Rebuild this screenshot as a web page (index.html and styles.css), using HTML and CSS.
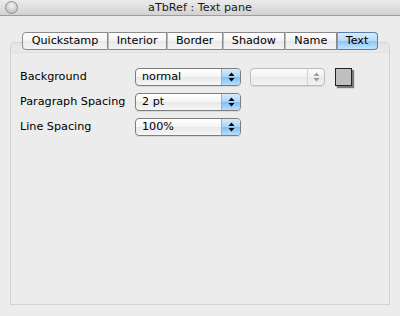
FILE: index.html
```html
<!DOCTYPE html>
<html>
<head>
<meta charset="utf-8">
<link rel="stylesheet" href="styles.css">
</head>
<body>
<div class="window">
  <div class="titlebar">
    <div class="controls"><span class="close"></span></div>
    <div class="title">aTbRef : Text pane</div>
    <div></div>
  </div>
  <div class="body">
    <div class="tabs">
      <span class="tab">Quickstamp</span>
      <span class="tab">Interior</span>
      <span class="tab">Border</span>
      <span class="tab">Shadow</span>
      <span class="tab">Name</span>
      <span class="tab selected">Text</span>
    </div>
    <div class="pane">
      <div class="band"></div>
      <div class="form">
        <div class="label">Background</div>
        <div class="controls-row">
          <div class="popup"><span class="value">normal</span><span class="arrows"><svg width="7" height="10" viewBox="0 0 7 10"><path d="M3.5 0.5 L6.5 4 L0.5 4 Z M0.5 6 L6.5 6 L3.5 9.5 Z" fill="#000"/></svg></span></div>
          <div class="popup disabled"><span class="value"></span><span class="arrows"><svg width="7" height="10" viewBox="0 0 7 10"><path d="M3.5 0.5 L6.5 4 L0.5 4 Z M0.5 6 L6.5 6 L3.5 9.5 Z" fill="#9a9a9a"/></svg></span></div>
          <div class="swatch"></div>
        </div>
        <div class="label">Paragraph Spacing</div>
        <div class="controls-row">
          <div class="popup"><span class="value">2 pt</span><span class="arrows"><svg width="7" height="10" viewBox="0 0 7 10"><path d="M3.5 0.5 L6.5 4 L0.5 4 Z M0.5 6 L6.5 6 L3.5 9.5 Z" fill="#000"/></svg></span></div>
        </div>
        <div class="label">Line Spacing</div>
        <div class="controls-row">
          <div class="popup"><span class="value">100%</span><span class="arrows"><svg width="7" height="10" viewBox="0 0 7 10"><path d="M3.5 0.5 L6.5 4 L0.5 4 Z M0.5 6 L6.5 6 L3.5 9.5 Z" fill="#000"/></svg></span></div>
        </div>
      </div>
    </div>
  </div>
</div>
</body>
</html>
```
FILE: styles.css
```css
html, body {
  margin: 0;
  padding: 0;
}
body {
  width: 400px;
  height: 316px;
  background: #ececec;
  font-family: "DejaVu Sans", "Liberation Sans", sans-serif;
  font-size: 11.2px;
  color: #000;
  overflow: hidden;
}
.window {
  width: 400px;
  height: 316px;
  background: #ececec;
}
.titlebar {
  height: 15px;
  display: grid;
  grid-template-columns: 1fr auto 1fr;
  align-items: center;
  background: linear-gradient(#ebebeb, #d2d2d2);
  border-bottom: 1px solid #9d9d9d;
}
.controls {
  display: flex;
  align-items: center;
  padding-left: 5px;
}
.close {
  display: block;
  width: 11px;
  height: 11px;
  border-radius: 50%;
  border: 1px solid #8f8f8f;
  background: radial-gradient(circle at 50% 35%, #f4f4f4 0%, #cfcfcf 55%, #b0b0b0 100%);
  margin-top: -1px;
}
.title {
  font-size: 11.2px;
  color: #1a1a1a;
  line-height: 15px;
}
.body {
  padding: 16px 10px 0 10px;
}
.tabs {
  display: flex;
  justify-content: center;
  position: relative;
  z-index: 1;
  margin-bottom: -8px;
}
.tab {
  height: 16px;
  line-height: 16px;
  padding: 0 8.2px;
  border: 1px solid #8a8a8a;
  border-left: 1px solid #bcbcbc;
  background: linear-gradient(#ffffff 0%, #f3f3f3 50%, #e8e8e8 51%, #f4f4f4 100%);
}
.tab:first-child {
  border-left: 1px solid #8a8a8a;
  border-radius: 4px 0 0 4px;
}
.tab:last-child {
  border-radius: 0 4px 4px 0;
}
.tab.selected {
  background: linear-gradient(#d8ecfd 0%, #b3d9fb 50%, #8dc5f7 51%, #c3e3fd 100%);
  border-color: #5a7fa8;
  border-left-color: #7a9cc2;
}
.pane {
  height: 261px;
  border: 1px solid #d3d3d3;
  border-radius: 4px 4px 0 0;
  background: #ececec;
}
.band {
  height: 9px;
  background: linear-gradient(#e4e4e4, #e9e9e9);
  border-bottom: 1px solid #e0e0e0;
  border-radius: 3px 3px 0 0;
}
.form {
  display: grid;
  grid-template-columns: 115px auto;
  row-gap: 7px;
  align-items: center;
  padding: 15px 0 0 9px;
}
.label {
  line-height: 18px;
}
.controls-row {
  display: flex;
  align-items: center;
}
.popup {
  width: 104px;
  height: 16px;
  display: flex;
  border: 1px solid #7e7e7e;
  border-radius: 4px;
  background: linear-gradient(#ffffff 0%, #f4f4f4 50%, #e8e8e8 51%, #f6f6f6 100%);
  overflow: hidden;
  box-shadow: 0 1px 0 rgba(0,0,0,0.08);
}
.popup .value {
  flex: 1;
  padding-left: 6px;
  line-height: 16px;
}
.popup .arrows {
  width: 18px;
  display: flex;
  align-items: center;
  justify-content: center;
  background: linear-gradient(#d6ebfd 0%, #a9d4fa 50%, #7fbdf5 51%, #b9defc 100%);
  border-left: 1px solid #8fb4d8;
}
.popup.disabled {
  width: 73px;
  margin-left: 9px;
  border-color: #bcbcbc;
  background: linear-gradient(#fbfbfb 0%, #f2f2f2 50%, #e9e9e9 51%, #f3f3f3 100%);
}
.popup.disabled .arrows {
  background: transparent;
  border-left: 1px solid #d4d4d4;
  width: 16px;
}
.swatch {
  width: 15px;
  height: 16px;
  margin-left: 10px;
  border: 1px solid #222;
  background: #c0c0c0;
  box-shadow: 2px 2px 1px #7a7a7a;
}
```
